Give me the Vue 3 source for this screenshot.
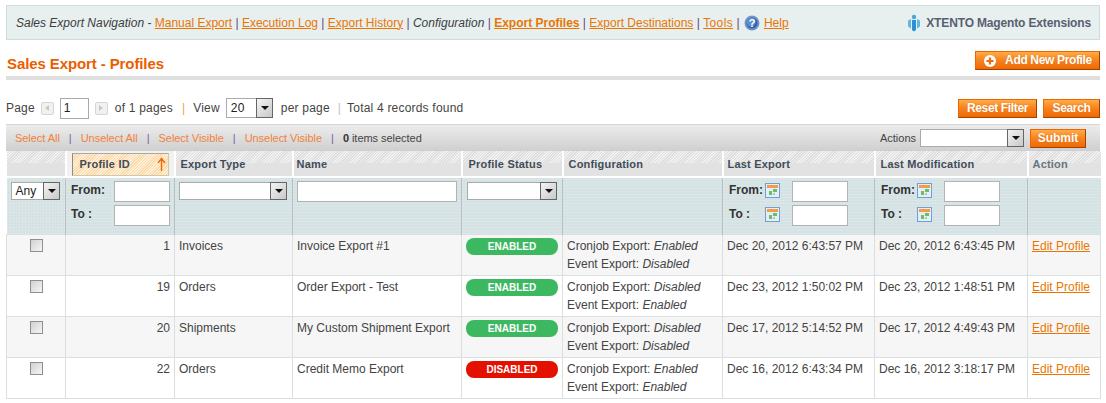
<script setup>
const rows = [
  { id: 1, type: 'Invoices', name: 'Invoice Export #1', on: true, cron: 'Enabled', ev: 'Disabled', last: 'Dec 20, 2012 6:43:57 PM', mod: 'Dec 20, 2012 6:43:45 PM' },
  { id: 19, type: 'Orders', name: 'Order Export - Test', on: true, cron: 'Disabled', ev: 'Enabled', last: 'Dec 23, 2012 1:50:02 PM', mod: 'Dec 23, 2012 1:48:51 PM' },
  { id: 20, type: 'Shipments', name: 'My Custom Shipment Export', on: true, cron: 'Disabled', ev: 'Disabled', last: 'Dec 17, 2012 5:14:52 PM', mod: 'Dec 17, 2012 4:49:43 PM' },
  { id: 22, type: 'Orders', name: 'Credit Memo Export', on: false, cron: 'Enabled', ev: 'Enabled', last: 'Dec 16, 2012 6:43:34 PM', mod: 'Dec 16, 2012 3:18:17 PM' }
]
const dateCols = ['a', 'b']
const rangeRows = ['From:', 'To :']
</script>

<template>
  <div class="page">
    <div class="notice">
      <div class="nav">
        <i>Sales Export Navigation</i> - <a>Manual Export</a><span class="sep"> | </span><a>Execution Log</a><span class="sep"> | </span><a>Export History</a><span class="sep"> | </span><i>Configuration</i><span class="sep"> | </span><a class="strong">Export Profiles</a><span class="sep"> | </span><a>Export Destinations</a><span class="sep"> | </span><a class="tools">Tools</a><span class="sep"> | </span><svg class="help" viewBox="0 0 16 16" width="16" height="16">
          <circle cx="8" cy="8" r="7.5" fill="#6f97cc" />
          <circle cx="8" cy="8" r="5.6" fill="#2f63ab" />
          <circle cx="7" cy="7" r="4.6" fill="#5f8dca" />
          <text x="8" y="11.8" text-anchor="middle" class="q">?</text>
        </svg><a class="helplink">Help</a>
      </div>
      <div class="brand">
        <svg class="logo" viewBox="0 0 14 18" width="14" height="18">
          <circle cx="7" cy="3" r="2.2" fill="#4ba3dc" />
          <path d="M1 6.5 L4 5 V14.5 L1 12.5 Z M13 6.5 L10 5 V14.5 L13 12.5 Z" fill="#63b7e8" />
          <path d="M5 6 H9 V16 L7 17.5 L5 16 Z" fill="#2f8fd0" />
        </svg>
        <b>XTENTO Magento Extensions</b>
      </div>
    </div>

    <div class="head">
      <h3>Sales Export - Profiles</h3>
      <button class="btn add">
        <svg viewBox="0 0 14 14" width="14" height="14">
          <circle cx="7" cy="7" r="6" fill="#fff" />
          <path d="M7 3.5 V10.5 M3.5 7 H10.5" stroke="#ee6a08" stroke-width="2.2" />
        </svg>
        Add New Profile
      </button>
    </div>

    <div class="pager">
      <div class="pager-left">
        <span>Page</span>
        <span class="arrow"><span class="tri left"></span></span>
        <input class="page-input" value="1" />
        <span class="arrow next"><span class="tri right"></span></span>
        <span>of 1 pages</span>
        <span class="bar">|</span>
        <span>View</span>
        <span class="sel view"><span class="sel-text">20</span><span class="drop"></span></span>
        <span>per page</span>
        <span class="bar thin">|</span>
        <span>Total 4 records found</span>
      </div>
      <div class="pager-right">
        <button class="btn">Reset Filter</button>
        <button class="btn">Search</button>
      </div>
    </div>

    <div class="mass">
      <div class="mass-left">
        <a>Select All</a><span class="pipe">|</span>
        <a>Unselect All</a><span class="pipe">|</span>
        <a>Select Visible</a><span class="pipe">|</span>
        <a>Unselect Visible</a><span class="pipe">|</span>
        <span><b>0</b> items selected</span>
      </div>
      <div class="mass-right">
        <span>Actions</span>
        <span class="sel actions"><span class="sel-text"></span><span class="drop"></span></span>
        <button class="btn submit">Submit</button>
      </div>
    </div>

    <table class="grid">
      <colgroup>
        <col class="c1" /><col class="c2" /><col class="c3" />
        <col class="c4" /><col class="c5" /><col class="c6" />
        <col class="c7" /><col class="c8" /><col class="c9" />
      </colgroup>
      <thead>
        <tr class="headings">
          <th></th>
          <th class="sorted">
            <span class="sort-box">Profile ID
              <svg viewBox="0 0 9 15" width="9" height="15"><path d="M4.5 14 V2 M1 6 L4.5 1.5 L8 6" fill="none" stroke="#ee6a08" stroke-width="1.4" /></svg>
            </span>
          </th>
          <th>Export Type</th>
          <th class="h-name">Name</th>
          <th class="h-status">Profile Status</th>
          <th>Configuration</th>
          <th class="h-last">Last Export</th>
          <th>Last Modification</th>
          <th class="muted">Action</th>
        </tr>
        <tr class="filter">
          <th class="tight"><span class="sel any"><span class="sel-text">Any</span><span class="drop"></span></span></th>
          <th>
            <div v-for="l in rangeRows" :key="l" class="range"><b>{{ l }}</b><input class="fin" /></div>
          </th>
          <th class="tight"><span class="sel wide"><span class="sel-text"></span><span class="drop"></span></span></th>
          <th class="tight"><input class="name-in" /></th>
          <th><span class="sel status"><span class="sel-text"></span><span class="drop"></span></span></th>
          <th></th>
          <th v-for="c in dateCols" :key="c" class="dt">
            <div v-for="l in rangeRows" :key="l" class="range date">
              <b>{{ l }}</b>
              <svg class="cal" viewBox="0 0 15 15" width="15" height="15">
                <rect x=".5" y=".5" width="14" height="14" fill="#e6eef5" stroke="#6f9fd4" />
                <rect x="2" y="2" width="11" height="3" fill="#f59b45" />
                <rect x="8" y="6" width="4" height="3" fill="#6dbb6d" />
                <rect x="4" y="8" width="3" height="4" fill="#6dbb6d" />
                <rect x="8" y="10" width="2" height="2" fill="#a5d3a5" />
              </svg>
              <input class="fin" />
            </div>
          </th>
          <th></th>
        </tr>
      </thead>
      <tbody>
        <tr v-for="(r, i) in rows" :key="r.id" :class="{ even: i % 2 === 0 }">
          <td class="c"><span class="check"></span></td>
          <td class="num">{{ r.id }}</td>
          <td>{{ r.type }}</td>
          <td>{{ r.name }}</td>
          <td class="st"><span class="pill" :class="r.on ? 'on' : 'off'">{{ r.on ? 'ENABLED' : 'DISABLED' }}</span></td>
          <td>Cronjob Export: <i>{{ r.cron }}</i><br />Event Export: <i>{{ r.ev }}</i></td>
          <td>{{ r.last }}</td>
          <td>{{ r.mod }}</td>
          <td><a class="edit">Edit Profile</a></td>
        </tr>
      </tbody>
    </table>
  </div>
</template>

<style>
html, body { margin: 0; background: #fff; }
</style>

<style scoped>
.page {
  width: 1094px;
  padding: 5px 6px 0;
  font: 12px/18px "Liberation Sans", Arial, sans-serif;
  color: #444;
}
a { color: #ea7601; text-decoration: underline; }
.notice {
  height: 33px;
  display: flex;
  align-items: center;
  justify-content: space-between;
  padding: 0 8px 0 9px;
  background: #e7efef;
  border: 1px solid #cddddd;
}
.nav { white-space: pre; color: #444; }
.nav i { color: #3d3d3d; }
.sep { color: #6f3f7f; }
.strong { font-weight: bold; }
.tools { letter-spacing: .4px; }
.help { vertical-align: -4px; margin-left: 1px; }
.helplink { margin-left: 4px; }
.q { font: bold 11px "Liberation Sans", sans-serif; fill: #fff; }
.brand { display: flex; align-items: center; gap: 5px; color: #5a5f70; letter-spacing: -.15px; }
.head {
  display: flex;
  justify-content: space-between;
  align-items: flex-start;
  height: 26px;
  padding-top: 10px;
  border-bottom: 4px solid #dfdfdf;
}
h3 { margin: 5px 0 0 1px; font-size: 15px; letter-spacing: -.1px; line-height: 18px; font-weight: bold; color: #eb5e00; }
.btn {
  box-sizing: border-box;
  height: 19px;
  padding: 0;
  border: 1px solid #ed6502;
  border-bottom-color: #a04300;
  border-right-color: #a04300;
  background: linear-gradient(#ffac47, #f9841f 45%, #ee6a05);
  color: #fff;
  font: bold 12px/15px "Liberation Sans", Arial, sans-serif;
  letter-spacing: -.35px;
  white-space: nowrap;
  text-shadow: 0 0 1px #c96a10;
  display: inline-flex;
  align-items: center;
  justify-content: center;
  cursor: pointer;
}
.add { width: 125px; gap: 8px; margin-top: 1px; }
.pager {
  display: flex;
  justify-content: space-between;
  align-items: center;
  height: 20px;
  margin-top: 18px;
}
.pager-left { display: flex; align-items: center; letter-spacing: .2px; }
.pager-right { display: flex; gap: 6px; }
.pager-right .btn:first-child { width: 79px; }
.pager-right .btn:last-child { width: 57px; }
.arrow {
  width: 11px; height: 11px;
  margin: 0 6px;
  border: 1px solid #d6d6d6;
  background: #f1f1f1;
  border-radius: 2px;
  display: flex;
  align-items: center;
  justify-content: center;
}
.arrow.next { margin-right: 7px; }
.tri { width: 0; height: 0; border-top: 3px solid transparent; border-bottom: 3px solid transparent; }
.tri.left { border-right: 4px solid #c8c8c8; }
.tri.right { border-left: 4px solid #c8c8c8; }
.page-input {
  box-sizing: border-box;
  width: 29px;
  height: 21px;
  padding: 0 3px;
  border: 1px solid #aaa;
  font: 12px "Liberation Sans", Arial, sans-serif;
  color: #222;
  outline: 0;
}
.bar { margin: 0 8px 0 9px; color: #e9a24c; }
.bar.thin { margin: 0 6px 0 8px; color: #bcc6cc; }
.sel {
  display: inline-flex;
  box-sizing: border-box;
  height: 18px;
  background: #fff;
  border: 1px solid #aaa;
  font-size: 12px;
  font-weight: normal;
  line-height: 16px;
  color: #222;
  vertical-align: top;
}
.filter .sel { margin-top: 1px; }
.sel-text { flex: 1; padding-left: 4px; overflow: hidden; }
.drop {
  position: relative;
  width: 17px;
  margin: -1px -1px -1px 0;
  box-sizing: border-box;
  border: 1px solid #666;
  background: linear-gradient(135deg, #f4f4f4, #c8c8c8);
}
.drop::after {
  content: "";
  position: absolute;
  left: 4px;
  top: 6px;
  border-left: 4px solid transparent;
  border-right: 4px solid transparent;
  border-top: 4px solid #111;
}
.view { width: 47px; margin: 0 8px 0 6px; height: 20px; line-height: 18px; }
.view .drop::after { top: 7px; }
.mass {
  box-sizing: border-box;
  height: 27px;
  margin-top: 6px;
  padding: 0 14px 0 9px;
  display: flex;
  justify-content: space-between;
  align-items: center;
  border-top: 1px solid #d6d6d6;
  background: linear-gradient(#ececec, #cfcfcf);
  font-size: 11px;
}
.mass-left { display: flex; align-items: center; letter-spacing: -.04px; }
.mass a { color: #f3823a; text-decoration: none; }
.pipe { color: #7a5aa5; margin: 0 9px; }
.mass-left b { color: #333; }
.mass-right { display: flex; align-items: center; }
.actions { width: 104px; margin-left: 4px; }
.submit { width: 56px; margin-left: 6px; letter-spacing: 0; }
.grid {
  table-layout: fixed;
  width: 1094px;
  border-collapse: collapse;
}
.c1 { width: 59px; } .c2 { width: 109px; } .c3 { width: 118px; }
.c4 { width: 169px; } .c5 { width: 101px; } .c6 { width: 160px; }
.c7 { width: 152px; } .c8 { width: 153px; } .c9 { width: 73px; }
th { text-align: left; font-weight: bold; padding: 0; }
.headings th {
  height: 24px;
  padding: 0 4px 0 5px;
  font-size: 11px;
  letter-spacing: .2px;
  color: #3f4d59;
  border-left: 2px solid #fff;
  border-bottom: 2px solid #fff;
  background:
    linear-gradient(transparent 50%, #e2e2e2 50%),
    repeating-linear-gradient(135deg, #f1f1f1 0 1px, #dedede 1px 2px);
}
.headings th:first-child { border-left: 0; }
.headings .h-name { padding-left: 3px; }
.headings .h-status { padding-left: 6px; }
.headings .h-last { padding-left: 4px; }
.headings .muted { color: #66777f; padding-left: 4px; }
.headings .sorted { padding: 1px 5px 0 5px; background: #f1f1f1; }
.sort-box {
  display: flex;
  justify-content: space-between;
  align-items: center;
  height: 21px;
  padding: 0 2px 0 7px;
  border: 1px solid #d8c6a4;
  border-left-color: #8b8b8b;
  border-top-color: #a9a9a9;
  background: repeating-linear-gradient(135deg, #fcd9a8 0 1px, #fff0da 1px 2px);
}
.filter th {
  height: 57px;
  box-sizing: border-box;
  vertical-align: top;
  padding: 3px 4px 0 5px;
  border-left: 1px solid #b9bfc0;
  border-top: 1px solid #9ea5a6;
  background:
    repeating-linear-gradient(0deg, rgba(255,255,255,.13) 0 1px, transparent 1px 3px),
    repeating-linear-gradient(90deg, rgba(255,255,255,.13) 0 1px, transparent 1px 3px),
    #d3e1e3;
  color: #333;
}
.filter th:first-child { border-left: 0; }
.filter th.tight { padding-left: 4px; }
.filter th.dt { padding-left: 6px; }
.any { width: 49px; }
.wide { width: 108px; }
.status { width: 90px; }
.range { display: flex; align-items: center; height: 21px; margin-bottom: 3px; }
.range b { flex: 0 0 auto; padding-bottom: 3px; }
.range .fin { margin-left: auto; }
.range.date b { width: 36px; }
.cal { flex: 0 0 auto; margin-bottom: 2px; }
.range.date .fin { margin-left: 12px; }
.fin, .name-in {
  box-sizing: border-box;
  height: 21px;
  border: 1px solid #b3b3b3;
  background: #fff;
  outline: 0;
  padding: 0 2px;
}
.fin { width: 56px; }
.name-in { width: 160px; display: block; }
td {
  padding: 2px 4px;
  border: 1px solid #dadfe0;
  vertical-align: top;
  line-height: 18px;
  height: 36px;
  white-space: nowrap;
  overflow: hidden;
}
.even td { background: #f6f6f6; }
.check {
  display: block;
  box-sizing: border-box;
  width: 13px; height: 13px;
  margin: 2px auto 0;
  border: 1px solid #8f8f8f;
  background: linear-gradient(135deg, #d0d0d0, #f6f6f6);
}
.num { text-align: right; }
.pill {
  display: block;
  height: 17px;
  margin-top: 1px;
  border-radius: 8px;
  color: #fff;
  font-size: 10px;
  line-height: 17px;
  font-weight: bold;
  text-align: center;
}
.on { background: #3cb861; }
.off { background: #e41101; }
.edit { color: #ea7601; }
</style>
